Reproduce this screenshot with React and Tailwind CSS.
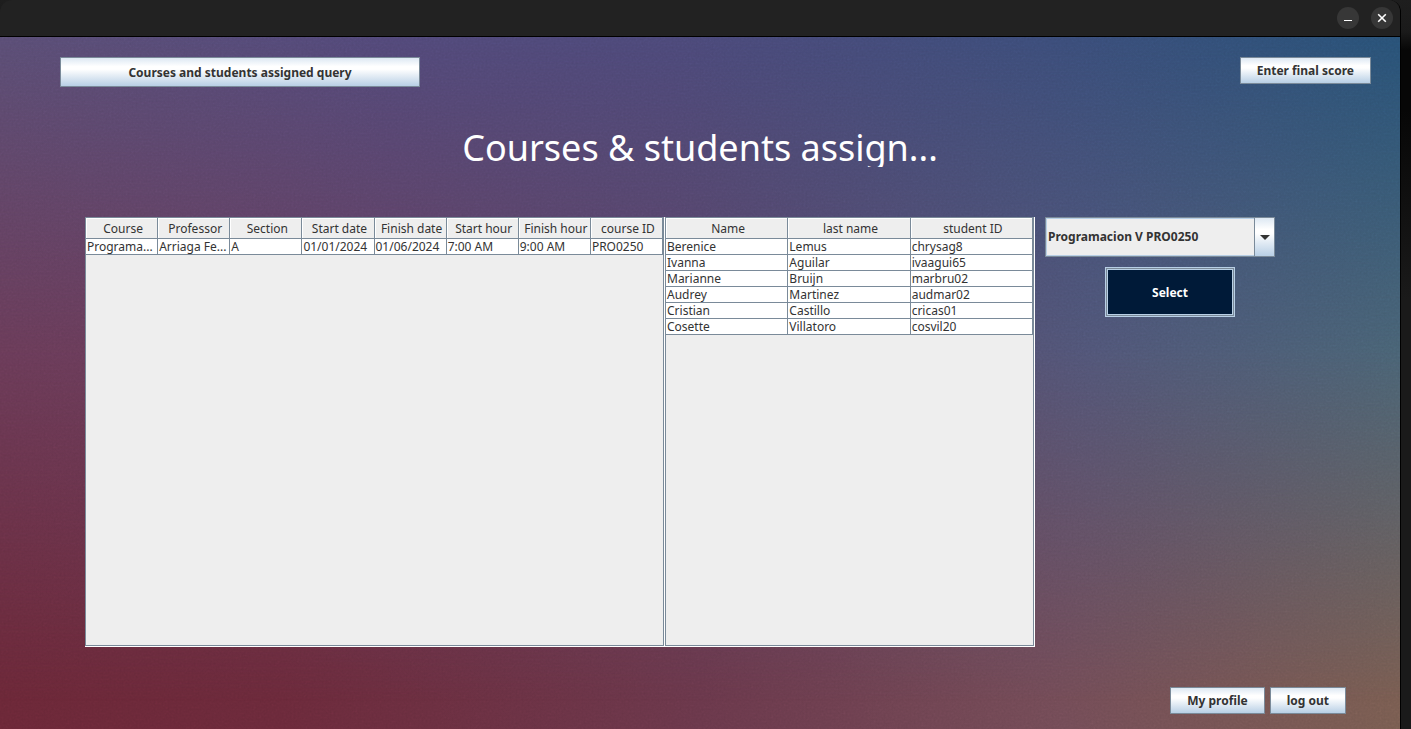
const courseColumns = ["Course", "Professor", "Section", "Start date", "Finish date", "Start hour", "Finish hour", "course ID"];
const courseRows = [["Programa...", "Arriaga Fe...", "A", "01/01/2024", "01/06/2024", "7:00 AM", "9:00 AM", "PRO0250"]];
const studentColumns = ["Name", "last name", "student ID"];
const studentRows = [
  ["Berenice", "Lemus", "chrysag8"],
  ["Ivanna", "Aguilar", "ivaagui65"],
  ["Marianne", "Bruijn", "marbru02"],
  ["Audrey", "Martinez", "audmar02"],
  ["Cristian", "Castillo", "cricas01"],
  ["Cosette", "Villatoro", "cosvil20"],
];

function MetalButton({ children, className = "h-[27px]" }) {
  return (
    <button
      type="button"
      className={
        "border border-[#7a8a99] bg-[linear-gradient(#dde8f3_0%,#ffffff_30%,#ffffff_40%,#b8cfe5_100%)] px-4 text-xs leading-4 font-bold whitespace-nowrap text-[#333333] " +
        className
      }
    >
      {children}
    </button>
  );
}

function DataPane({ label, columns, rows }) {
  return (
    <div className="min-w-0 border-r border-b border-white">
      <div className="h-full overflow-hidden border border-[#7a8a99] bg-[#eeeeee]">
        <table aria-label={label} className="w-full table-fixed border-separate border-spacing-0 text-xs text-[#333333]">
          <thead>
            <tr>
              {columns.map((name) => (
                <th
                  key={name}
                  className="h-[21px] overflow-hidden border-r border-b border-[#7a8a99] p-0 pt-[2px] pl-[3px] text-center leading-[18px] font-normal whitespace-nowrap shadow-[inset_1px_1px_0_#ffffff]"
                >
                  {name}
                </th>
              ))}
            </tr>
          </thead>
          <tbody>
            {rows.map((row) => (
              <tr key={row[0]}>
                {row.map((cell, i) => (
                  <td
                    key={i}
                    className="h-4 overflow-hidden border-r border-b border-[#7a8a99] bg-white p-0 pl-px leading-[15px] whitespace-nowrap"
                  >
                    {cell}
                  </td>
                ))}
              </tr>
            ))}
          </tbody>
        </table>
      </div>
    </div>
  );
}

function Backdrop() {
  return (
    <div aria-hidden="true" className="absolute inset-0 -z-10">
      <div className="absolute inset-0 bg-[linear-gradient(90deg,#6a2737_0%,#6a293a_20%,#69374a_50%,#724b56_76%,#785c50_100%)]" />
      <div className="absolute inset-0 bg-[linear-gradient(90deg,#693b58_0%,#673d5c_20%,#5c4466_50%,#505577_78%,#486274_100%)] [mask-image:linear-gradient(#000_45%,transparent_96%)]" />
      <div className="absolute inset-0 bg-[linear-gradient(90deg,#594d74_0%,#514878_28%,#4b4878_48%,#3b4c78_75%,#285176_100%)] [mask-image:linear-gradient(#000_0%,transparent_45%)]" />
      <svg className="absolute inset-0 h-full w-full opacity-15 mix-blend-overlay">
        <filter id="grain">
          <feTurbulence type="fractalNoise" baseFrequency="0.5" numOctaves="2" />
          <feColorMatrix type="saturate" values="0" />
        </filter>
        <rect width="100%" height="100%" filter="url(#grain)" />
      </svg>
    </div>
  );
}

export default function App() {
  return (
    <div className="flex min-h-screen bg-[linear-gradient(#1e1e1e_0px,#1a1a1a_32px,#070707_50px,#070707_110px,#1a1a1a_300px,#1a1a1a_100%)] pr-[10px] font-['Noto_Sans',sans-serif]">
      <div className="flex min-w-0 flex-1 flex-col overflow-hidden rounded-t-xl border-r border-black">
        <header className="flex h-[37px] items-center justify-end gap-3 border-b border-black bg-[#222222] pr-[7px]">
          <button type="button" aria-label="Minimize" className="flex size-[22px] items-center justify-center rounded-full bg-[#373737]">
            <svg width="22" height="22" viewBox="0 0 22 22">
              <path d="M7 13.5h8" stroke="#fff" strokeWidth="1.2" />
            </svg>
          </button>
          <button type="button" aria-label="Close" className="flex size-[22px] items-center justify-center rounded-full bg-[#373737]">
            <svg width="22" height="22" viewBox="0 0 22 22">
              <path d="M7.2 7.2l7.6 7.6M14.8 7.2l-7.6 7.6" stroke="#fff" strokeWidth="1.6" />
            </svg>
          </button>
        </header>

        <main className="relative isolate flex flex-1 flex-col pt-5 pb-[15px]">
          <Backdrop />
          <div className="flex items-start justify-between pr-[29px] pl-[60px]">
            <MetalButton className="h-[30px] w-[360px] pt-px">Courses and students assigned query</MetalButton>
            <MetalButton>Enter final score</MetalButton>
          </div>

          <h1 className="mt-10 h-10 overflow-hidden text-center text-4xl leading-[42px] font-normal whitespace-nowrap text-white">
            Courses &amp; students assign...
          </h1>

          <div className="mt-[50px] flex flex-1 gap-[10px] pr-[125px] pl-[85px]">
            <section className="grid min-w-0 flex-1 grid-cols-[58fr_37fr]">
              <DataPane label="Courses" columns={courseColumns} rows={courseRows} />
              <DataPane label="Students" columns={studentColumns} rows={studentRows} />
            </section>

            <aside className="flex w-[230px] flex-col gap-[10px]">
              <div className="relative">
                <select
                  aria-label="Course"
                  className="block h-10 w-full appearance-none border border-[#7a8a99] bg-[#eeeeee] pl-[2px] text-xs font-bold text-[#333333] shadow-[inset_0_0_0_1px_#b8cfe5]"
                >
                  <option>Programacion V PRO0250</option>
                </select>
                <span className="pointer-events-none absolute inset-y-px right-px flex w-5 items-center justify-center border-l border-[#7a8a99] bg-[linear-gradient(#dde8f3_0%,#ffffff_30%,#ffffff_40%,#b8cfe5_100%)]">
                  <svg width="10" height="5" viewBox="0 0 10 5">
                    <path d="M0 0h10L5 5z" fill="#333" />
                  </svg>
                </span>
              </div>
              <button
                type="button"
                className="mr-10 h-[50px] w-[130px] self-end border border-[#b8cfe5] bg-[#001a38] pt-px text-xs font-bold text-white shadow-[inset_0_0_0_1px_#7a8a99,inset_0_0_0_2px_#b8cfe5]"
              >
                Select
              </button>
            </aside>
          </div>

          <footer className="mt-10 flex justify-end gap-[5px] pr-[54px]">
            <MetalButton>My profile</MetalButton>
            <MetalButton>log out</MetalButton>
          </footer>
        </main>
      </div>
    </div>
  );
}
